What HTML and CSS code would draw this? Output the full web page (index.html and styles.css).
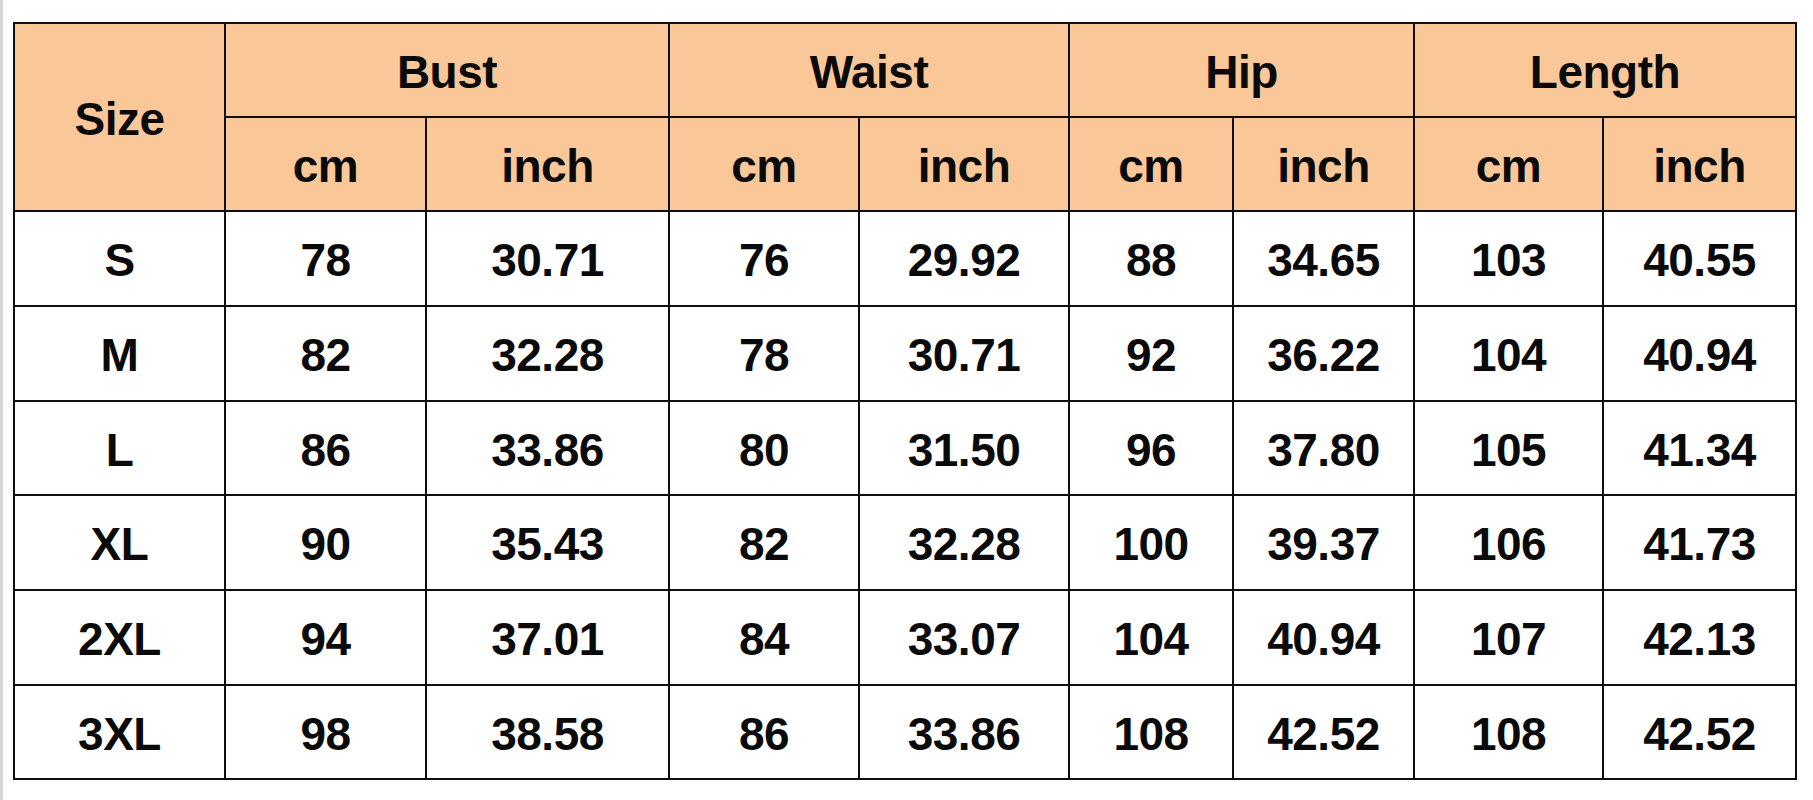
FILE: index.html
```html
<!DOCTYPE html>
<html>
<head>
<meta charset="utf-8">
<title>Size Chart</title>
<link rel="stylesheet" href="styles.css">
</head>
<body>
<div class="page">
  <div class="chart">
    <div class="cell head size">Size</div>
    <div class="cell head group">Bust</div>
    <div class="cell head group">Waist</div>
    <div class="cell head group">Hip</div>
    <div class="cell head group">Length</div>
    <div class="cell head">cm</div><div class="cell head">inch</div>
    <div class="cell head">cm</div><div class="cell head">inch</div>
    <div class="cell head">cm</div><div class="cell head">inch</div>
    <div class="cell head">cm</div><div class="cell head">inch</div>

    <div class="cell">S</div><div class="cell">78</div><div class="cell">30.71</div><div class="cell">76</div><div class="cell">29.92</div><div class="cell">88</div><div class="cell">34.65</div><div class="cell">103</div><div class="cell">40.55</div>
    <div class="cell">M</div><div class="cell">82</div><div class="cell">32.28</div><div class="cell">78</div><div class="cell">30.71</div><div class="cell">92</div><div class="cell">36.22</div><div class="cell">104</div><div class="cell">40.94</div>
    <div class="cell">L</div><div class="cell">86</div><div class="cell">33.86</div><div class="cell">80</div><div class="cell">31.50</div><div class="cell">96</div><div class="cell">37.80</div><div class="cell">105</div><div class="cell">41.34</div>
    <div class="cell">XL</div><div class="cell">90</div><div class="cell">35.43</div><div class="cell">82</div><div class="cell">32.28</div><div class="cell">100</div><div class="cell">39.37</div><div class="cell">106</div><div class="cell">41.73</div>
    <div class="cell">2XL</div><div class="cell">94</div><div class="cell">37.01</div><div class="cell">84</div><div class="cell">33.07</div><div class="cell">104</div><div class="cell">40.94</div><div class="cell">107</div><div class="cell">42.13</div>
    <div class="cell">3XL</div><div class="cell">98</div><div class="cell">38.58</div><div class="cell">86</div><div class="cell">33.86</div><div class="cell">108</div><div class="cell">42.52</div><div class="cell">108</div><div class="cell">42.52</div>
  </div>
</div>
</body>
</html>
```
FILE: styles.css
```css
html, body {
  margin: 0;
  padding: 0;
  background: #ffffff;
}

.page {
  box-sizing: border-box;
  height: 800px;
  border-left: 3px solid #d6d6d6;
  padding: 22px 0 0 10px;
}

.chart {
  display: inline-grid;
  grid-template-columns: 209px 199px 241px 188px 208px 162px 179px 187px 191px;
  grid-template-rows: 92px 92px 93px 93px 92px 93px 93px 92px;
  gap: 2px;
  padding: 2px;
  background: #0e0e0e;
  font-family: "Liberation Sans", Arial, sans-serif;
  font-weight: bold;
  font-size: 46px;
  letter-spacing: -0.5px;
  color: #0a0a0a;
}

.cell {
  background: #ffffff;
  display: flex;
  align-items: center;
  justify-content: center;
  line-height: 1;
  padding-top: 3px;
}

.head {
  background: #fac898;
}

.size {
  grid-row: span 2;
}

.group {
  grid-column: span 2;
}
```
